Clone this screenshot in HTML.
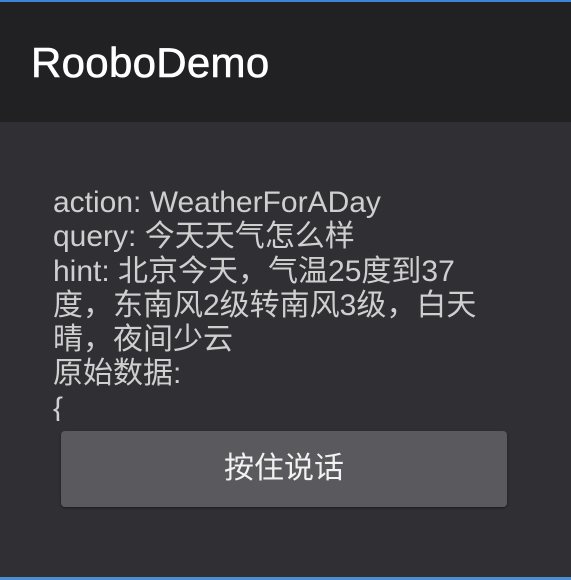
<!DOCTYPE html>
<html><head><meta charset="utf-8"><style>
html,body{margin:0;padding:0;}
body{width:571px;height:580px;background:#302f33;position:relative;overflow:hidden;font-family:"Liberation Sans","Noto Sans CJK SC",sans-serif;}
.topb{position:absolute;left:0;top:0;width:571px;height:2px;background:#3a86d6;}
.bar{position:absolute;left:0;top:2px;width:571px;height:120px;background:#212123;}
.title{position:absolute;left:31px;top:36px;font-size:42px;color:#fff;line-height:50px;letter-spacing:0.3px;-webkit-text-stroke:0.6px #fff;}
.txt{position:absolute;left:53px;top:186px;width:510px;height:235px;overflow:hidden;color:#cfcfd0;font-size:30px;line-height:34.3px;white-space:nowrap;}
.btn{position:absolute;left:61px;top:431px;width:446px;height:76px;background:#5a595e;border-radius:4px;box-shadow:0 1px 2px rgba(0,0,0,.4);color:#f2f2f2;font-size:30px;text-align:center;line-height:76px;}
.botb{position:absolute;left:0;top:577px;width:571px;height:3px;background:#4a90d0;}
</style></head><body>
<div class="topb"></div>
<div class="bar"><div class="title">RooboDemo</div></div>
<div class="txt">action: WeatherForADay<br>query: 今天天气怎么样<br>hint: 北京今天，气温25度到37<br>度，东南风2级转南风3级，白天<br>晴，夜间少云<br>原始数据:<br>{</div>
<div class="btn">按住说话</div>
<div class="botb"></div>
</body></html>
